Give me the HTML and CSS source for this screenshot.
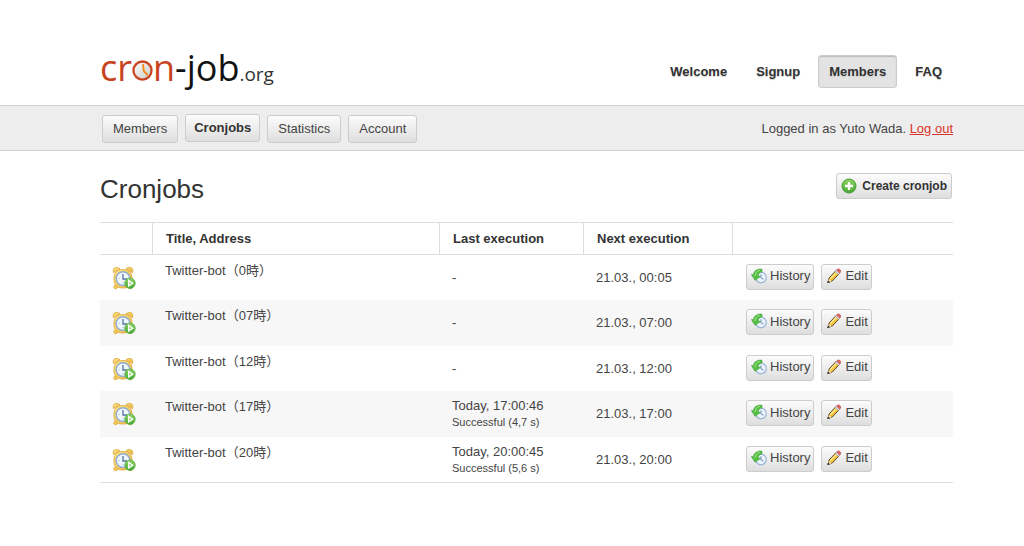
FILE: index.html
```
<!DOCTYPE html>
<html lang="en">
<head>
    <meta charset="UTF-8">
    <meta name="viewport" content="width=device-width, initial-scale=1.0">
    <title>cron-job.org - Cronjobs</title>
    <link rel="stylesheet" href="styles.css">
</head>
<body>
    <svg class="sprite" aria-hidden="true">
        <defs>
            <linearGradient id="gold" x1="0" y1="0" x2="1" y2="1">
                <stop offset="0" stop-color="#ffe88a"/>
                <stop offset="1" stop-color="#edb336"/>
            </linearGradient>
            <linearGradient id="green" x1="0" y1="0" x2="0" y2="1">
                <stop offset="0" stop-color="#8bd45f"/>
                <stop offset="1" stop-color="#45a834"/>
            </linearGradient>
            <linearGradient id="face" x1="0" y1="0" x2="1" y2="1">
                <stop offset="0" stop-color="#ffffff"/>
                <stop offset="1" stop-color="#c9c9c9"/>
            </linearGradient>
        </defs>
        <symbol id="icon-alarm" viewBox="0 0 24 24">
            <g fill="url(#gold)" stroke="#dba83e" stroke-width=".8">
                <circle cx="3.6" cy="20.8" r="1.9"/>
                <circle cx="18.4" cy="20.8" r="1.9"/>
                <rect x="2" y="3.5" width="18" height="18.5" rx="7.5"/>
                <path d="M1.4 6.6Q.6 3 2.4 1.900 5 .6 8 2.600zM20.600 6.600Q21.400 3 19.600 1.900 17 .6 14 2.600z"/>
            </g>
            <circle cx="11" cy="12.600" r="6.900" fill="#f0f6fd" stroke="#91abd1" stroke-width="1.500"/>
            <path d="M11 8V13H15" fill="none" stroke="#55739f" stroke-width="1.300"/>
            <path d="M6.500 12.600h1M11 17.200v-1" stroke="#91abd1"/>
            <circle cx="18" cy="17.200" r="5.200" fill="url(#green)" stroke="#58ad46" stroke-width=".8"/>
            <path d="M16.600 14.300l4.200 2.900-4.200 2.900z" fill="#8fd373" stroke="#fff" stroke-width="1.300"/>
        </symbol>
        <symbol id="icon-history" viewBox="0 0 16 16">
            <circle cx="10" cy="9.500" r="5.300" fill="#edf4fd" stroke="#9bb3d6" stroke-width="1.200"/>
            <path d="M10 6.300V9.800l2.500 1.500" fill="none" stroke="#7d9ac4" stroke-width="1.100"/>
            <path d="M11 1.200C6.500.5 3 2.800 2.300 6.800L.4 6.500 4 12.300l5.600-3.800-2.500-.7c.2-2 1.400-3.400 3.900-4z" fill="#55bf43" stroke="#3aa035" stroke-width=".6"/>
            <path d="M8.800 2.300C5.800 2.900 4.300 4.800 4 8.200" fill="none" stroke="#a9e68d"/>
        </symbol>
        <symbol id="icon-edit" viewBox="0 0 16 16">
            <path d="M1.800 14.700l1.300-4.700L9.600 3l3.300 3L6.300 13z" fill="#f5c23c" stroke="#5d4c2c" stroke-width="1"/>
            <path d="M4.300 10.600l6-6.300" stroke="#fff0a4" stroke-width="1.200"/>
            <path d="M10 2.600l1.200-1.200q1.400-1 2.700.2 1.400 1.400.4 2.800l-1.100 1.400z" fill="#e6635c" stroke="#b4524c" stroke-width=".7"/>
            <path d="M9.200 3.500l3.300 3 1-1.200-3.200-2.900z" fill="#dfe4ec" stroke="#8e97a5" stroke-width=".5"/>
            <path d="M1.800 14.700l1-3.700 2.800 2.600z" fill="#f4dfb7"/>
            <path d="M1.400 15.100l.8-2.600 1.800 1.700z" fill="#222"/>
        </symbol>
        <symbol id="icon-add" viewBox="0 0 16 16">
            <circle cx="8" cy="8" r="7" fill="url(#green)" stroke="#4a9b3c" stroke-width="1"/>
            <path d="M8 4v8M4 8h8" stroke="#fff" stroke-width="2.400"/>
        </symbol>
        <symbol id="logo-clock" viewBox="0 0 20 20">
            <circle cx="10" cy="10" r="8.600" fill="url(#face)" stroke="#c8431f" stroke-width="2.200"/>
            <path d="M10.500 4l.7 6.500 3.800 4" fill="none" stroke="#f08a1d" stroke-width="1.800"/>
        </symbol>
    </svg>

    <header class="header">
        <div class="container header-row">
            <a class="logo" href="#" aria-label="cron-job.org">
                <span class="logo-red">cr</span><svg class="logo-clock"><use href="#logo-clock"/></svg><span class="logo-red">n</span><span>-job</span><span class="logo-org">.org</span>
            </a>
            <nav class="main-nav">
                <a href="#">Welcome</a>
                <a href="#">Signup</a>
                <a href="#" class="active">Members</a>
                <a href="#">FAQ</a>
            </nav>
        </div>
    </header>

    <div class="sub-bar">
        <div class="container sub-row">
            <nav class="sub-nav">
                <a href="#">Members</a>
                <a href="#" class="active">Cronjobs</a>
                <a href="#">Statistics</a>
                <a href="#">Account</a>
            </nav>
            <p class="login">Logged in as Yuto Wada. <a href="#">Log out</a></p>
        </div>
    </div>

    <main class="container">
        <div class="title-row">
            <h1>Cronjobs</h1>
            <button type="button" class="btn btn-create"><svg><use href="#icon-add"/></svg>Create cronjob</button>
        </div>
        <table class="jobs">
            <colgroup>
                <col class="col-icon">
                <col>
                <col class="col-last">
                <col class="col-next">
                <col class="col-actions">
            </colgroup>
            <thead>
                <tr>
                    <th></th>
                    <th>Title, Address</th>
                    <th>Last execution</th>
                    <th>Next execution</th>
                    <th></th>
                </tr>
            </thead>
            <tbody>
                <tr>
                    <td class="icon"><svg><use href="#icon-alarm"/></svg></td>
                    <td class="name">Twitter-bot（0時）</td>
                    <td>-</td>
                    <td>21.03., 00:05</td>
                    <td>
                        <div class="actions">
                            <button type="button" class="btn"><svg><use href="#icon-history"/></svg>History</button>
                            <button type="button" class="btn"><svg><use href="#icon-edit"/></svg>Edit</button>
                        </div>
                    </td>
                </tr>
                <tr>
                    <td class="icon"><svg><use href="#icon-alarm"/></svg></td>
                    <td class="name">Twitter-bot（07時）</td>
                    <td>-</td>
                    <td>21.03., 07:00</td>
                    <td>
                        <div class="actions">
                            <button type="button" class="btn"><svg><use href="#icon-history"/></svg>History</button>
                            <button type="button" class="btn"><svg><use href="#icon-edit"/></svg>Edit</button>
                        </div>
                    </td>
                </tr>
                <tr>
                    <td class="icon"><svg><use href="#icon-alarm"/></svg></td>
                    <td class="name">Twitter-bot（12時）</td>
                    <td>-</td>
                    <td>21.03., 12:00</td>
                    <td>
                        <div class="actions">
                            <button type="button" class="btn"><svg><use href="#icon-history"/></svg>History</button>
                            <button type="button" class="btn"><svg><use href="#icon-edit"/></svg>Edit</button>
                        </div>
                    </td>
                </tr>
                <tr>
                    <td class="icon"><svg><use href="#icon-alarm"/></svg></td>
                    <td class="name">Twitter-bot（17時）</td>
                    <td>Today, 17:00:46<small>Successful (4,7 s)</small></td>
                    <td>21.03., 17:00</td>
                    <td>
                        <div class="actions">
                            <button type="button" class="btn"><svg><use href="#icon-history"/></svg>History</button>
                            <button type="button" class="btn"><svg><use href="#icon-edit"/></svg>Edit</button>
                        </div>
                    </td>
                </tr>
                <tr>
                    <td class="icon"><svg><use href="#icon-alarm"/></svg></td>
                    <td class="name">Twitter-bot（20時）</td>
                    <td>Today, 20:00:45<small>Successful (5,6 s)</small></td>
                    <td>21.03., 20:00</td>
                    <td>
                        <div class="actions">
                            <button type="button" class="btn"><svg><use href="#icon-history"/></svg>History</button>
                            <button type="button" class="btn"><svg><use href="#icon-edit"/></svg>Edit</button>
                        </div>
                    </td>
                </tr>
            </tbody>
        </table>
    </main>
</body>
</html>
```
FILE: styles.css
```
* {
    box-sizing: border-box;
}
body {
    margin: 0;
    background-color: #fff;
    color: #444;
    font-family: "Liberation Sans", "Noto Sans CJK JP", sans-serif;
    font-size: 13px;
    line-height: 16px;
}
.sprite {
    position: absolute;
    width: 0;
    height: 0;
}
.container {
    padding: 0 71px 0 100px;
}
.header {
    padding: 48px 0 11px;
}
.header-row,
.sub-row,
.title-row {
    display: flex;
    justify-content: space-between;
    align-items: center;
}
.logo {
    display: flex;
    align-items: baseline;
    padding-bottom: 6px;
    color: #111;
    font-family: "Open Sans", sans-serif;
    font-size: 36px;
    font-weight: 500;
    line-height: 40px;
    text-decoration: none;
}
.logo-red {
    color: #c8431f;
}
.logo-clock {
    width: 21px;
    height: 21px;
}
.logo-org {
    color: #333;
    font-size: 19px;
    line-height: 20px;
}
.main-nav {
    display: flex;
    gap: 7px;
}
.main-nav a {
    padding: 8px 10px 7px;
    border: 1px solid transparent;
    border-radius: 3px;
    color: #333;
    font-weight: bold;
    line-height: 16px;
    text-decoration: none;
    text-shadow: 0 1px 1px #ccc;
}
.main-nav .active {
    background-color: #e3e3e3;
    border-color: #ccc;
    box-shadow: inset 0 1px 1px #bbb;
}
.sub-bar {
    background-color: #ededed;
    border-top: 1px solid #d0d0d0;
    border-bottom: 1px solid #d0d0d0;
    padding: 8px 0 7px;
}
.sub-nav {
    display: flex;
    gap: 7px;
    padding-left: 2px;
}
.sub-nav a,
.btn {
    background: linear-gradient(#fcfcfc, #dedede);
    border: 1px solid #ccc;
    border-radius: 3px;
    color: #444;
    text-decoration: none;
}
.sub-nav a {
    margin-top: 1px;
    padding: 5px 10px;
}
.sub-nav .active {
    margin: 0 0 1px;
    padding: 5px 8px;
    color: #333;
    font-weight: bold;
}
.login {
    margin: 0;
}
.login a {
    color: #d9342b;
}
.title-row {
    align-items: flex-start;
    padding: 22px 1px 17px 0;
}
h1 {
    margin: 0;
    color: #333;
    font-size: 26px;
    font-weight: normal;
    line-height: 32px;
}
.btn {
    display: flex;
    align-items: center;
    gap: 3px;
    height: 26px;
    padding: 0 3px 2px 4px;
    font-family: inherit;
    font-size: 13px;
    white-space: nowrap;
    cursor: pointer;
}
.btn:hover {
    background: #e6e6e6;
}
.btn svg {
    width: 16px;
    height: 16px;
}
.btn-create {
    gap: 5px;
    padding: 0 4px 1px;
    color: #333;
    font-size: 12px;
    font-weight: bold;
}
.jobs {
    width: 100%;
    table-layout: fixed;
    border-collapse: separate;
    border-spacing: 0;
    border-top: 1px solid #ddd;
    border-bottom: 1px solid #ddd;
}
.col-icon {
    width: 53px;
}
.col-last {
    width: 144px;
}
.col-next {
    width: 149px;
}
.col-actions {
    width: 220px;
}
th {
    height: 32px;
    padding: 0 13px;
    border-right: 1px solid #ddd;
    border-bottom: 1px solid #ddd;
    color: #333;
    text-align: left;
}
th:last-child {
    border-right: 0;
}
td {
    height: 45px;
    padding: 0 12px;
}
td:last-child {
    padding-left: 13px;
    padding-bottom: 2px;
}
tr:nth-child(even) td {
    height: 46px;
    background-color: #f7f7f7;
}
.icon svg {
    display: block;
    width: 24px;
    height: 24px;
}
.name {
    padding-top: 8px;
    vertical-align: top;
}
small {
    display: block;
    font-size: 11px;
}
.actions {
    display: flex;
    gap: 7px;
}
```
